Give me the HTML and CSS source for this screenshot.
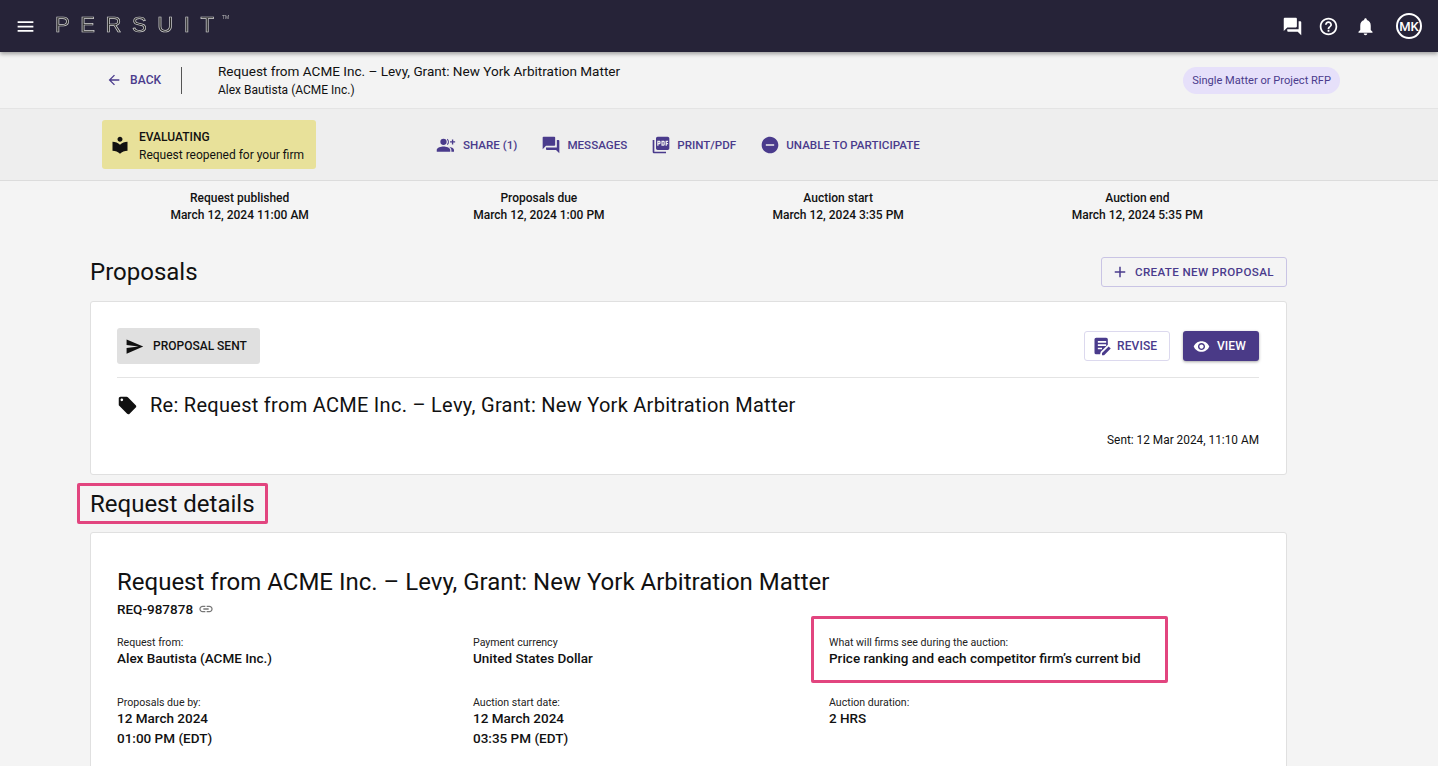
FILE: index.html
```html
<!DOCTYPE html>
<html lang="en">
<head>
<meta charset="utf-8">
<title>Persuit</title>
<link rel="stylesheet" href="styles.css">
</head>
<body>
<header class="topbar">
  <svg class="ic ic-menu" viewBox="0 0 24 24"><path d="M3 18h18v-2H3v2zm0-5h18v-2H3v2zm0-7v2h18V6H3z"/></svg>
  <div class="logo">PERSUI<span class="logo-last">T</span><span class="logo-tm">TM</span></div>
  <div class="top-icons">
    <svg class="ic ic-top" viewBox="0 0 24 24"><path d="M21 6h-2v9H6v2c0 .55.45 1 1 1h11l4 4V7c0-.55-.45-1-1-1zm-4 6V3c0-.55-.45-1-1-1H3c-.55 0-1 .45-1 1v14l4-4h10c.55 0 1-.45 1-1z"/></svg>
    <svg class="ic ic-top" viewBox="0 0 24 24"><path d="M11 18h2v-2h-2v2zm1-16C6.48 2 2 6.48 2 12s4.48 10 10 10 10-4.48 10-10S17.52 2 12 2zm0 18c-4.41 0-8-3.59-8-8s3.59-8 8-8 8 3.59 8 8-3.59 8-8 8zm0-14c-2.21 0-4 1.79-4 4h2c0-1.1.9-2 2-2s2 .9 2 2c0 2-3 1.75-3 5h2c0-2.25 3-2.5 3-5 0-2.21-1.79-4-4-4z"/></svg>
    <svg class="ic ic-top" viewBox="0 0 24 24"><path d="M12 22c1.1 0 2-.9 2-2h-4c0 1.1.89 2 2 2zm6-6v-5c0-3.07-1.64-5.64-4.5-6.32V4c0-.83-.67-1.5-1.5-1.5s-1.5.67-1.5 1.5v.68C7.63 5.36 6 7.92 6 11v5l-2 2v1h16v-1l-2-2z"/></svg>
    <div class="avatar">MK</div>
  </div>
</header>

<section class="subhead">
  <a class="back">
    <svg class="ic ic-back" viewBox="0 0 24 24"><path d="M20 11H7.83l5.59-5.59L12 4l-8 8 8 8 1.41-1.41L7.83 13H20v-2z"/></svg>
    BACK
  </a>
  <div class="vrule"></div>
  <div class="subhead-text">
    <div class="subhead-title">Request from ACME Inc. – Levy, Grant: New York Arbitration Matter</div>
    <div class="subhead-sub">Alex Bautista (ACME Inc.)</div>
  </div>
  <div class="pill">Single Matter or Project RFP</div>
</section>

<section class="actionbar">
  <div class="status">
    <svg class="ic ic-status" viewBox="0 0 24 24"><path d="M12 11.55C9.64 9.35 6.48 8 3 8v11c3.48 0 6.64 1.35 9 3.55 2.36-2.19 5.52-3.55 9-3.55V8c-3.48 0-6.64 1.35-9 3.55zM12 8c1.66 0 3-1.34 3-3s-1.34-3-3-3-3 1.34-3 3 1.34 3 3 3z"/></svg>
    <div class="status-text">
      <div class="status-title">EVALUATING</div>
      <div class="status-sub">Request reopened for your firm</div>
    </div>
  </div>
  <nav class="actions">
    <a class="action">
      <svg class="ic ic-action ic-share" viewBox="0 0 28 24"><path d="M10 12a4.2 4.2 0 1 0 0-8.400a4.200 4.200 0 0 0 0 8.400zM10 14c-3 0-9 1.500-9 4.500V21h18v-2.500C19 15.500 13 14 10 14zM15.500 3.800l-.9 1.200a4.300 4.300 0 0 1 0 5.900l.9 1.200a5.800 5.800 0 0 0 0-8.300zM17 14.300c1.800.9 3.500 2.300 3.500 4.200V21H24v-2.500c0-2.300-3.700-3.700-7-4.200zM23 7V4.500h-1.800V7h-2.500v1.800h2.500v2.500H23V8.800h2.500V7z"/></svg>
      SHARE (1)
    </a>
    <a class="action">
      <svg class="ic ic-action" viewBox="0 0 24 24"><path d="M21 6h-2v9H6v2c0 .55.45 1 1 1h11l4 4V7c0-.55-.45-1-1-1zm-4 6V3c0-.55-.45-1-1-1H3c-.55 0-1 .45-1 1v14l4-4h10c.55 0 1-.45 1-1z"/></svg>
      MESSAGES
    </a>
    <a class="action">
      <svg class="ic ic-action" viewBox="0 0 24 24"><path d="M20 2H8c-1.100 0-2 .9-2 2v12c0 1.100.9 2 2 2h12c1.100 0 2-.9 2-2V4c0-1.100-.9-2-2-2zm-8.500 7.500c0 .83-.67 1.500-1.500 1.500H9v2H7.500V7H10c.83 0 1.500.67 1.500 1.500v1zm5 2c0 .83-.67 1.500-1.500 1.500h-2.500V7H15c.83 0 1.500.67 1.500 1.500v3zm4-3H19v1h1.500V11H19v2h-1.500V7h3v1.500zM9 9.500h1v-1H9v1zM4 6H2v14c0 1.100.9 2 2 2h14v-2H4V6zm10 5.500h1v-3h-1v3z"/></svg>
      PRINT/PDF
    </a>
    <a class="action">
      <svg class="ic ic-action" viewBox="0 0 24 24"><path d="M12 2C6.480 2 2 6.480 2 12s4.480 10 10 10 10-4.480 10-10S17.520 2 12 2zm5 11H7v-2h10v2z"/></svg>
      UNABLE TO PARTICIPATE
    </a>
  </nav>
</section>

<section class="dates">
  <div class="date"><div>Request published</div><div>March 12, 2024 11:00 AM</div></div>
  <div class="date"><div>Proposals due</div><div>March 12, 2024 1:00 PM</div></div>
  <div class="date"><div>Auction start</div><div>March 12, 2024 3:35 PM</div></div>
  <div class="date"><div>Auction end</div><div>March 12, 2024 5:35 PM</div></div>
</section>

<main class="main">
  <div class="section-head">
    <h2 class="h-section">Proposals</h2>
    <a class="btn btn-create">
      <svg class="ic ic-add" viewBox="0 0 24 24"><path d="M19 13h-6v6h-2v-6H5v-2h6V5h2v6h6v2z"/></svg>
      CREATE NEW PROPOSAL
    </a>
  </div>

  <article class="card card-proposal">
    <div class="proposal-top">
      <div class="chip">
        <svg class="ic ic-send" viewBox="0 0 24 24"><path d="M2.010 21L23 12 2.010 3 2 10l15 2-15 2z"/></svg>
        PROPOSAL SENT
      </div>
      <div class="proposal-btns">
        <a class="btn btn-revise">
          <svg class="ic ic-revise" viewBox="0 0 24 24"><path d="M5 2h12a2 2 0 0 1 2 2v6.500l-8.500 8.500-.8 3H5a2 2 0 0 1-2-2V4a2 2 0 0 1 2-2zm2 4v2h10V6H7zm0 4v2h10v-2H7zm0 4v2h5v-2H7zM20 12.500l2.500 2.500-8 8H12v-2.500l8-8z"/></svg>
          REVISE
        </a>
        <a class="btn btn-view">
          <svg class="ic ic-view" viewBox="0 0 24 24"><path d="M12 4.500C7 4.500 2.730 7.610 1 12c1.730 4.390 6 7.500 11 7.500s9.270-3.110 11-7.500c-1.730-4.390-6-7.500-11-7.500zM12 17c-2.760 0-5-2.240-5-5s2.240-5 5-5 5 2.240 5 5-2.240 5-5 5zm0-8c-1.660 0-3 1.340-3 3s1.340 3 3 3 3-1.340 3-3-1.340-3-3-3z"/></svg>
          VIEW
        </a>
      </div>
    </div>
    <div class="proposal-title">
      <svg class="ic ic-tag" viewBox="0 0 24 24"><path d="M21.410 11.580l-9-9C12.050 2.220 11.550 2 11 2H4c-1.100 0-2 .9-2 2v7c0 .55.22 1.050.59 1.420l9 9c.36.36.86.58 1.410.58.55 0 1.050-.22 1.410-.59l7-7c.37-.36.59-.86.59-1.410 0-.55-.23-1.060-.59-1.420zM5.500 7C4.670 7 4 6.330 4 5.500S4.670 4 5.500 4 7 4.670 7 5.500 6.330 7 5.500 7z"/></svg>
      Re: Request from ACME Inc. – Levy, Grant: New York Arbitration Matter
    </div>
    <div class="sent">Sent: 12 Mar 2024, 11:10 AM</div>
  </article>

  <h2 class="h-section h-marked">Request details</h2>

  <article class="card card-details">
    <h1 class="details-title">Request from ACME Inc. – Levy, Grant: New York Arbitration Matter</h1>
    <div class="req-id">REQ-987878
      <svg class="ic ic-link" viewBox="0 0 24 24"><path d="M3.900 12c0-1.710 1.390-3.100 3.100-3.100h4V7H7c-2.760 0-5 2.240-5 5s2.240 5 5 5h4v-1.900H7c-1.710 0-3.100-1.390-3.100-3.100zM8 13h8v-2H8v2zm9-6h-4v1.900h4c1.710 0 3.100 1.390 3.100 3.100s-1.390 3.100-3.100 3.100h-4V17h4c2.760 0 5-2.240 5-5s-2.240-5-5-5z"/></svg>
    </div>
    <div class="facts">
      <div class="fact"><div class="fact-label">Request from:</div><div class="fact-value">Alex Bautista (ACME Inc.)</div></div>
      <div class="fact"><div class="fact-label">Payment currency</div><div class="fact-value">United States Dollar</div></div>
      <div class="fact fact-marked"><div class="fact-label">What will firms see during the auction:</div><div class="fact-value">Price ranking and each competitor firm’s current bid</div></div>
      <div class="fact"><div class="fact-label">Proposals due by:</div><div class="fact-value">12 March 2024</div><div class="fact-value">01:00 PM (EDT)</div></div>
      <div class="fact"><div class="fact-label">Auction start date:</div><div class="fact-value">12 March 2024</div><div class="fact-value">03:35 PM (EDT)</div></div>
      <div class="fact"><div class="fact-label">Auction duration:</div><div class="fact-value">2 HRS</div></div>
    </div>
  </article>
</main>
</body>
</html>
```
FILE: styles.css
```css
*, *::after { box-sizing: border-box; }
html, body { margin: 0; height: 766px; overflow: hidden; }
body { background: #f4f4f4; font-family: Roboto, "Liberation Sans", sans-serif; color: #111; }
h1, h2 { margin: 0; }
.ic { display: block; fill: currentColor; flex: none; }

.topbar { position: relative; z-index: 2; height: 52px; background: #262338; color: #fff; display: flex; align-items: center; padding: 0 16px 0 15px; box-shadow: 0 2px 4px rgba(0,0,0,.35); }
.ic-menu { width: 21px; height: 21px; }
.logo { display: flex; align-items: flex-start; margin: -2px 0 0 19px; font-family: "Liberation Sans", sans-serif; font-size: 22px; letter-spacing: 10.600px; color: #262338; -webkit-text-stroke: .7px #d4d4da; line-height: 22px; filter: grayscale(1); }
.logo-last { letter-spacing: 8px; }
.logo-tm { font-size: 5px; line-height: 6px; letter-spacing: 0; -webkit-text-stroke: 0; color: #bbb; }
.top-icons { margin-left: auto; display: flex; align-items: center; gap: 15.500px; }
.ic-top { width: 21px; height: 21px; }
.avatar { width: 26px; height: 26px; border: 2px solid #fff; border-radius: 50%; font-size: 13px; font-weight: 500; display: flex; align-items: center; justify-content: center; margin-left: 5px; }

.subhead { height: 57px; background: #f3f3f3; border-bottom: 1px solid #e4e4e4; display: flex; align-items: center; padding: 0 98px 0 106px; }
.back { display: flex; align-items: center; gap: 8px; color: #4a3b8c; font-size: 12px; font-weight: 500; letter-spacing: .1px; width: 75px; }
.ic-back { width: 16px; height: 16px; }
.vrule { width: 1px; height: 27px; background: #555; }
.subhead-text { margin: -1px 0 0 36px; }
.subhead-title { font-size: 13.550px; line-height: 20px; }
.subhead-sub { font-size: 12px; line-height: 16px; margin-top: 1px; }
.pill { margin-left: auto; height: 27px; padding: 0 9px; border-radius: 14px; background: #e6e0fa; color: #4a3b8c; font-size: 11.100px; display: flex; align-items: center; }

.actionbar { height: 72px; background: #eeeeee; border-bottom: 1px solid #dcdcdc; display: flex; align-items: center; padding-left: 102px; }
.status { width: 214px; height: 49px; background: #e8e19a; border-radius: 3px; display: flex; align-items: center; gap: 9.500px; padding-left: 7.500px; }
.ic-status { width: 20px; height: 20px; }
.status-text { margin-top: 3px; }
.status-title { font-size: 12px; font-weight: 500; line-height: 17px; }
.status-sub { font-size: 12px; line-height: 18px; }
.actions { display: flex; align-items: center; gap: 24px; margin-left: 120px; }
.action { display: flex; align-items: center; gap: 6px; color: #4a3b8c; font-size: 11.600px; font-weight: 500; }
.ic-action { width: 20px; height: 20px; }
.ic-share { width: 21px; height: 18px; }

.dates { display: grid; grid-template-columns: repeat(4, 1fr); margin: 0 151px 0 90px; padding-top: 9px; height: 76px; }
.date { text-align: center; font-size: 12px; line-height: 17px; font-weight: 500; }

.main { margin: 0 151px 0 90px; }
.section-head { display: flex; align-items: flex-start; justify-content: space-between; height: 44px; }
.h-section { font-size: 24px; line-height: 30px; font-weight: 400; }
.btn { display: flex; align-items: center; font-size: 12px; font-weight: 500; letter-spacing: .1px; border-radius: 3px; color: #4a3b8c; }
.btn-create { width: 186px; height: 30px; border: 1px solid #c9c4e4; padding: 0 0 1px 9px; gap: 6px; font-size: 11.600px; letter-spacing: .37px; }
.ic-add { width: 18px; height: 18px; }

.card { background: #fff; border: 1px solid #e0e0e0; border-radius: 3px; padding: 0 27px 0 26px; }
.card-proposal { height: 174px; }
.proposal-top { display: flex; align-items: center; justify-content: space-between; margin-top: 26px; padding-bottom: 13px; border-bottom: 1px solid #e4e4e4; }
.chip { display: flex; align-items: center; gap: 9px; width: 143px; height: 36px; padding-left: 8px; background: #e0e0e0; border-radius: 3px; font-size: 12px; font-weight: 500; }
.ic-send { width: 19px; height: 19px; }
.proposal-btns { display: flex; gap: 13px; }
.btn-revise { width: 86px; height: 30px; border: 1px solid #dcd9ee; background: #fff; padding-left: 6.500px; gap: 5.500px; }
.ic-revise { width: 20px; height: 20px; }
.btn-view { width: 76px; height: 30px; background: #4a3a87; color: #fff; padding-left: 10px; gap: 7px; box-shadow: 0 1px 3px rgba(0,0,0,.35); }
.ic-view { width: 17px; height: 17px; }
.proposal-title { display: flex; align-items: center; gap: 12px; font-size: 20px; letter-spacing: .28px; line-height: 26px; margin-top: 14px; color: #111; }
.ic-tag { width: 21px; height: 21px; }
.sent { text-align: right; font-size: 11.850px; line-height: 16px; margin-top: 14px; }

.h-marked { width: fit-content; margin: 8px 0 8px -13px; padding: 4px 10px 2px; border: 3px solid #e2457f; border-radius: 2px; line-height: 29px; height: 41px; }
.card-details { padding-top: 34px; height: 300px; }
.details-title { font-size: 24px; line-height: 30px; font-weight: 400; }
.req-id { display: flex; align-items: center; gap: 5px; font-size: 13.500px; font-weight: 500; line-height: 18px; margin-top: 3px; }
.ic-link { width: 16px; height: 16px; color: #777; }
.facts { display: grid; grid-template-columns: repeat(3, 356px); row-gap: 16px; margin-top: 17px; }
.fact { position: relative; min-height: 44px; }
.fact-label { font-size: 10.600px; line-height: 16px; margin-bottom: -3px; color: #222; }
.fact-value { font-size: 13.500px; font-weight: 500; line-height: 20px; }
.fact-marked::after { content: ""; position: absolute; left: -18px; top: -19px; width: 357px; height: 67px; border: 3px solid #e2457f; border-radius: 2px; }
```
